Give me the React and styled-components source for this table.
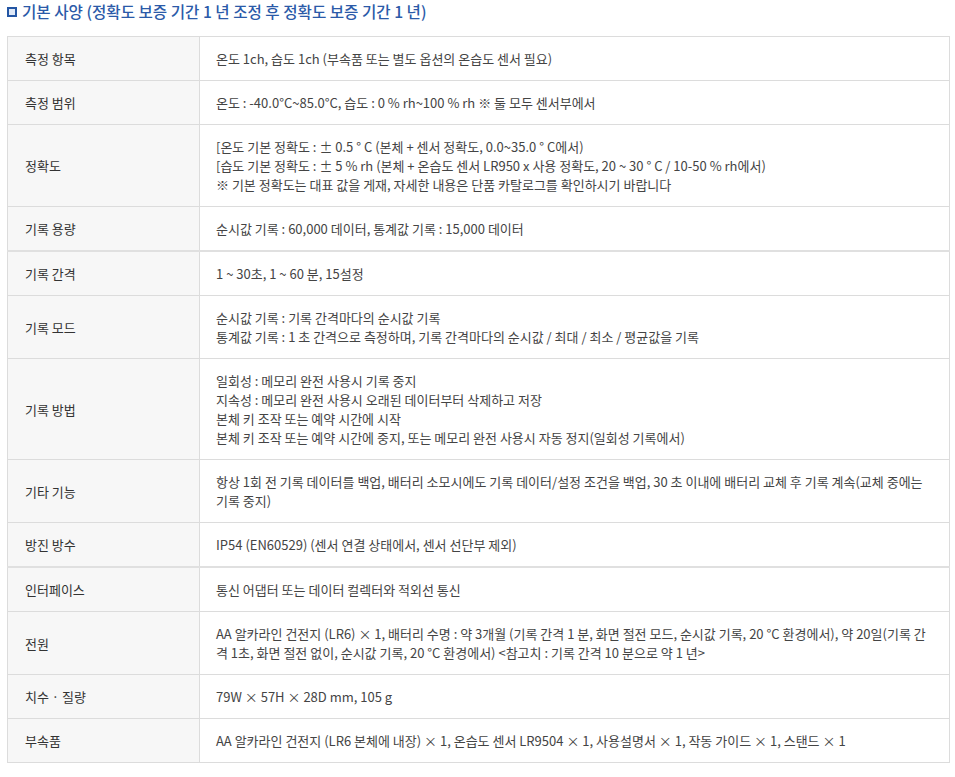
import styled, { createGlobalStyle } from "styled-components";

const GlobalStyle = createGlobalStyle`
  body {
    margin: 0;
    background: #fff;
    font-family: "Noto Sans CJK KR", "Noto Sans", sans-serif;
  }
`;

const Container = styled.div`
  padding: 2px 5px 16px 7px;
`;

const Heading = styled.h3`
  display: flex;
  align-items: center;
  gap: 5px;
  margin: 0 0 15px;
  font-size: 15.6px;
  font-weight: 500;
  line-height: 19px;
  color: #2b5aa8;
`;

const Bullet = styled.span`
  width: 6px;
  height: 6px;
  border: 2px solid #2456a4;
  background: #dfe9f8;
  flex-shrink: 0;
`;

const Table = styled.table`
  width: 100%;
  border-collapse: collapse;
  border: 1px solid #dcdcdc;
  font-size: 13px;
  line-height: 19px;
`;

const Row = styled.tr`
  border-top: ${(p) => (p.$thick ? "2px solid #e0e0e0" : "1px solid #dcdcdc")};
`;

const Th = styled.th`
  width: 158px;
  padding: 12px 16px 12px 17px;
  background: #f7f7f7;
  border-right: 1px solid #dcdcdc;
  text-align: left;
  font-weight: 400;
  color: #333;
  vertical-align: middle;
`;

const Td = styled.td`
  padding: 12px 16px;
  color: #444;
  vertical-align: middle;
`;

const Line = styled.div``;

const specs = [
  { label: "측정 항목", lines: ["온도 1ch, 습도 1ch (부속품 또는 별도 옵션의 온습도 센서 필요)"] },
  { label: "측정 범위", lines: ["온도 : -40.0°C~85.0°C, 습도 : 0 % rh~100 % rh ※ 둘 모두 센서부에서"] },
  {
    label: "정확도",
    lines: [
      "[온도 기본 정확도 : ± 0.5 ° C (본체 + 센서 정확도, 0.0~35.0 ° C에서)",
      "[습도 기본 정확도 : ± 5 % rh (본체 + 온습도 센서 LR950 x 사용 정확도, 20 ~ 30 ° C / 10-50 % rh에서)",
      "※ 기본 정확도는 대표 값을 게재, 자세한 내용은 단품 카탈로그를 확인하시기 바랍니다",
    ],
  },
  { label: "기록 용량", lines: ["순시값 기록 : 60,000 데이터, 통계값 기록 : 15,000 데이터"] },
  { label: "기록 간격", thick: true, lines: ["1 ~ 30초, 1 ~ 60 분, 15설정"] },
  {
    label: "기록 모드",
    lines: [
      "순시값 기록 : 기록 간격마다의 순시값 기록",
      "통계값 기록 : 1 초 간격으로 측정하며, 기록 간격마다의 순시값 / 최대 / 최소 / 평균값을 기록",
    ],
  },
  {
    label: "기록 방법",
    lines: [
      "일회성 : 메모리 완전 사용시 기록 중지",
      "지속성 : 메모리 완전 사용시 오래된 데이터부터 삭제하고 저장",
      "본체 키 조작 또는 예약 시간에 시작",
      "본체 키 조작 또는 예약 시간에 중지, 또는 메모리 완전 사용시 자동 정지(일회성 기록에서)",
    ],
  },
  {
    label: "기타 기능",
    lines: [
      "항상 1회 전 기록 데이터를 백업, 배터리 소모시에도 기록 데이터/설정 조건을 백업, 30 초 이내에 배터리 교체 후 기록 계속(교체 중에는 기록 중지)",
    ],
  },
  { label: "방진 방수", lines: ["IP54 (EN60529) (센서 연결 상태에서, 센서 선단부 제외)"] },
  { label: "인터페이스", thick: true, lines: ["통신 어댑터 또는 데이터 컬렉터와 적외선 통신"] },
  {
    label: "전원",
    lines: [
      "AA 알카라인 건전지 (LR6) × 1, 배터리 수명 : 약 3개월 (기록 간격 1 분, 화면 절전 모드, 순시값 기록, 20 °C 환경에서), 약 20일(기록 간격 1초, 화면 절전 없이, 순시값 기록, 20 °C 환경에서) <참고치 : 기록 간격 10 분으로 약 1 년>",
    ],
  },
  { label: "치수 · 질량", lines: ["79W × 57H × 28D mm, 105 g"] },
  {
    label: "부속품",
    lines: ["AA 알카라인 건전지 (LR6 본체에 내장) × 1, 온습도 센서 LR9504 × 1, 사용설명서 × 1, 작동 가이드 × 1, 스탠드 × 1"],
  },
];

export default function App() {
  return (
    <Container>
      <GlobalStyle />
      <Heading>
        <Bullet />
        기본 사양 (정확도 보증 기간 1 년 조정 후 정확도 보증 기간 1 년)
      </Heading>
      <Table>
        <tbody>
          {specs.map((spec) => (
            <Row key={spec.label} $thick={spec.thick}>
              <Th>{spec.label}</Th>
              <Td>
                {spec.lines.map((line) => (
                  <Line key={line}>{line}</Line>
                ))}
              </Td>
            </Row>
          ))}
        </tbody>
      </Table>
    </Container>
  );
}
